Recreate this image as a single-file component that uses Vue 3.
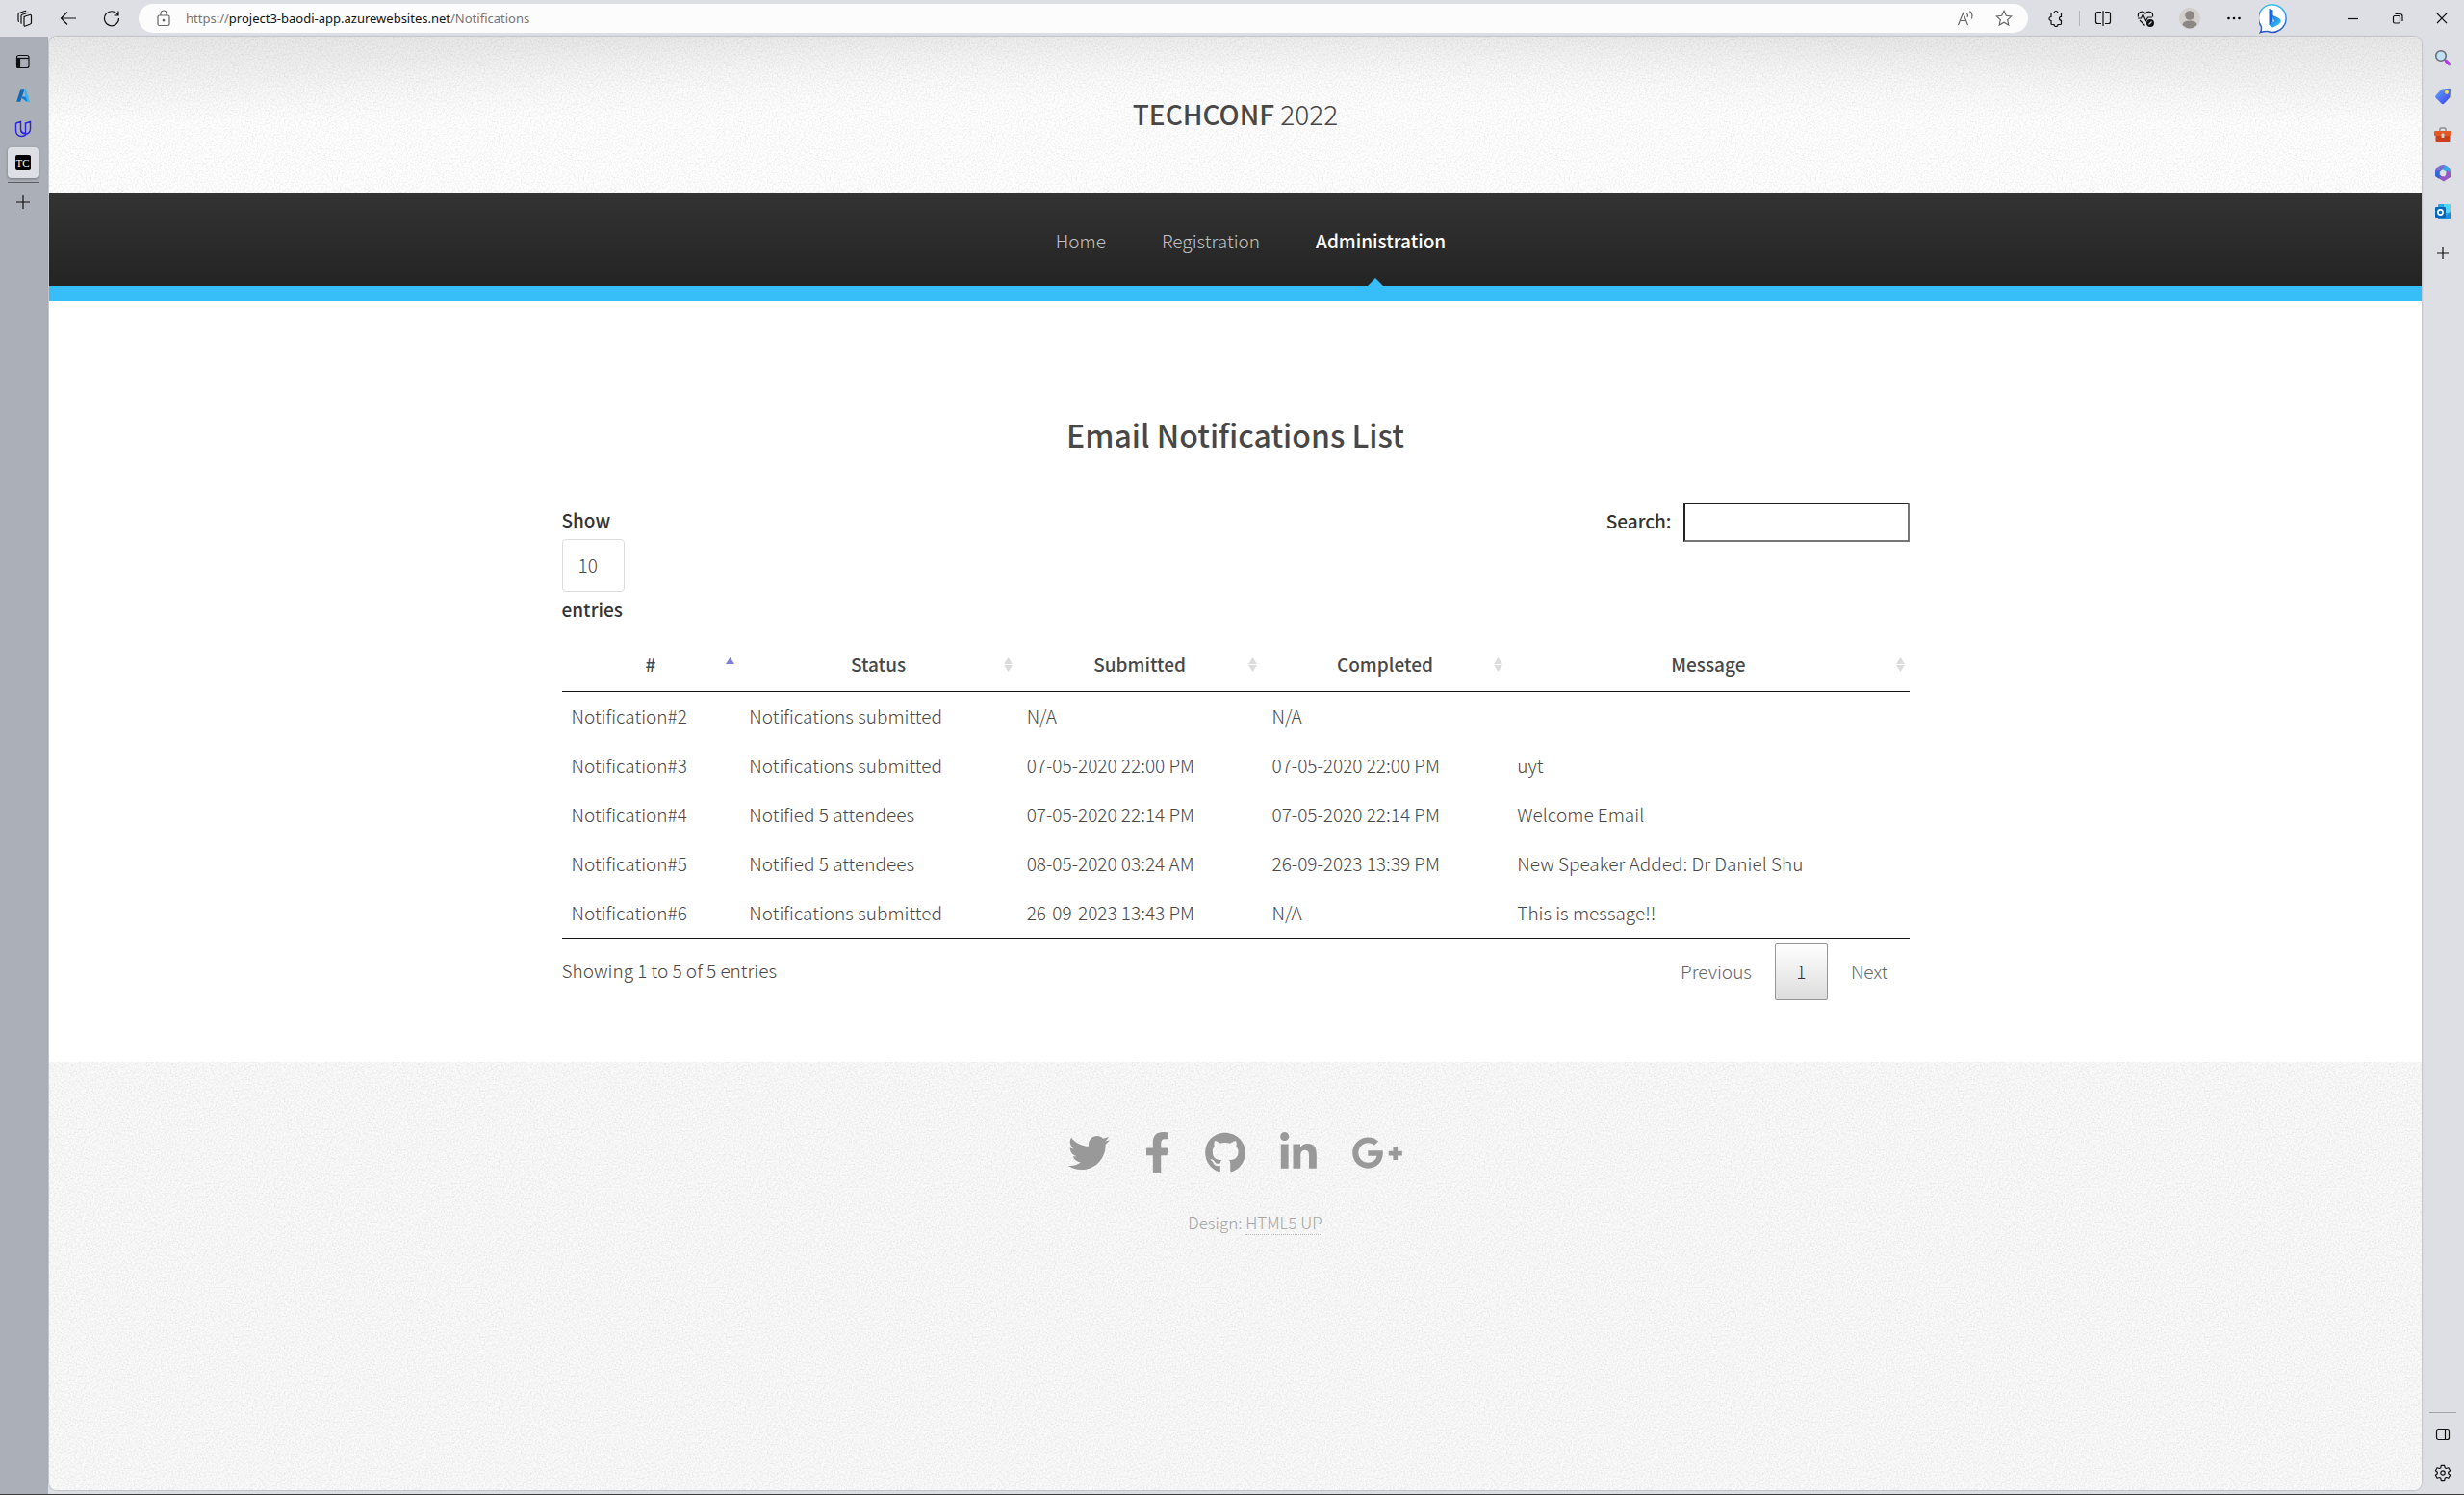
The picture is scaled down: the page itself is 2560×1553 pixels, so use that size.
<script setup>
import { ref } from 'vue'

const pageSize = ref('10')
const query = ref('')

const columns = [
  { name: '#', width: '13.2%', sorted: true },
  { name: 'Status', width: '20.6%' },
  { name: 'Submitted', width: '18.2%' },
  { name: 'Completed', width: '18.2%' },
  { name: 'Message', width: '29.8%' },
]

const rows = [
  ['Notification#2', 'Notifications submitted', 'N/A', 'N/A', ''],
  ['Notification#3', 'Notifications submitted', '07-05-2020 22:00 PM', '07-05-2020 22:00 PM', 'uyt'],
  ['Notification#4', 'Notified 5 attendees', '07-05-2020 22:14 PM', '07-05-2020 22:14 PM', 'Welcome Email'],
  ['Notification#5', 'Notified 5 attendees', '08-05-2020 03:24 AM', '26-09-2023 13:39 PM', 'New Speaker Added: Dr Daniel Shu'],
  ['Notification#6', 'Notifications submitted', '26-09-2023 13:43 PM', 'N/A', 'This is message!!'],
]

const socials = [
  { name: 'Twitter', w: 512, px: 43, d: 'M459.37 151.716c.325 4.548.325 9.097.325 13.645 0 138.72-105.583 298.558-298.558 298.558-59.452 0-114.68-17.219-161.137-47.106 8.447.974 16.568 1.299 25.34 1.299 49.055 0 94.213-16.568 130.274-44.832-46.132-.975-84.792-31.188-98.112-72.772 6.498.974 12.995 1.624 19.818 1.624 9.421 0 18.843-1.3 27.614-3.573-48.081-9.747-84.143-51.98-84.143-102.985v-1.299c13.969 7.797 30.214 12.67 47.431 13.319-28.264-18.843-46.781-51.005-46.781-87.391 0-19.492 5.197-37.36 14.294-52.954 51.655 63.675 129.3 105.258 216.365 109.807-1.624-7.797-2.599-15.918-2.599-24.04 0-57.828 46.782-104.934 104.934-104.934 30.213 0 57.502 12.67 76.67 33.137 23.715-4.548 46.456-13.32 66.599-25.34-7.798 24.366-24.366 44.833-46.132 57.827 21.117-2.273 41.584-8.122 60.426-16.243-14.292 20.791-32.161 39.308-52.628 54.253z' },
  { name: 'Facebook', w: 320, px: 27, d: 'M279.14 288l14.22-92.66h-88.91v-60.13c0-25.35 12.42-50.06 52.24-50.06h40.42V6.26S260.43 0 225.36 0c-73.22 0-121.08 44.38-121.08 124.72v70.62H22.89V288h81.39v224h100.17V288z' },
  { name: 'GitHub', w: 496, px: 42, d: 'M244.8 8C106.1 8 0 113.3 0 252c0 110.9 69.8 205.8 169.5 239.2 12.8 2.3 17.3-5.6 17.3-12.1 0-6.2-.3-40.4-.3-61.4 0 0-70 15-84.7-29.8 0 0-11.4-29.1-27.8-36.6 0 0-22.9-15.7 1.6-15.4 0 0 24.9 2 38.6 25.8 21.9 38.6 58.6 27.5 72.9 20.9 2.3-16 8.8-27.1 16-33.7-55.9-6.2-112.3-14.3-112.3-110.5 0-27.5 7.6-41.3 23.6-58.9-2.6-6.5-11.1-33.3 2.6-67.9 20.9-6.5 69 27 69 27 20-5.6 41.5-8.5 62.8-8.5s42.8 2.9 62.8 8.5c0 0 48.1-33.6 69-27 13.7 34.7 5.2 61.4 2.6 67.9 16 17.7 25.8 31.5 25.8 58.9 0 96.5-58.9 104.2-114.8 110.5 9.2 7.9 17 22.9 17 46.4 0 33.7-.3 75.4-.3 83.6 0 6.5 4.6 14.4 17.3 12.1C428.2 457.8 496 362.9 496 252 496 113.3 383.5 8 244.8 8z' },
  { name: 'LinkedIn', w: 448, px: 38, d: 'M100.28 448H7.4V148.9h92.88zM53.79 108.1C24.09 108.1 0 83.5 0 53.8a53.79 53.79 0 0 1 107.58 0c0 29.7-24.1 54.3-53.79 54.3zM447.9 448h-92.68V302.4c0-34.7-.7-79.2-48.29-79.2-48.29 0-55.69 37.7-55.69 76.7V448h-92.78V148.9h89.08v40.8h1.3c12.4-23.5 42.69-48.3 87.88-48.3 94 0 111.28 61.9 111.28 142.3V448z' },
  { name: 'Google Plus', w: 640, px: 54, d: 'M386.061 228.496c1.834 9.692 3.143 19.384 3.143 31.956C389.204 370.205 315.599 448 204.8 448c-106.084 0-192-85.915-192-192s85.916-192 192-192c51.864 0 95.083 18.859 128.611 50.292l-52.126 50.03c-14.145-13.621-39.028-29.599-76.485-29.599-65.484 0-118.92 54.221-118.92 121.277 0 67.056 53.436 121.277 118.92 121.277 75.961 0 104.513-54.745 108.965-82.773H204.8v-66.009h181.261zm185.406 6.437V179.2h-56.001v55.733h-55.733v56.001h55.733v55.733h56.001v-55.733H627.2v-56.001h-55.733z' },
]
</script>

<template>
  <div class="browser">
    <header class="toolbar">
      <div class="nav-buttons">
        <button class="tool" aria-label="Workspaces">
          <svg width="18" height="18" viewBox="0 0 18 18" class="line"><path d="M7.5 7.5 14 5.5q1.5-.3 1.5 1.200v6.800q0 1-1 1.500l-5 2q-1.500.5-1.500-1V8.500q0-1 1-1.300M5.500 14.500q-.5-.3-.5-1V6.500q0-1 1-1.300L12 3.300q1-.2 1.300.8M3 12.500q-1-.2-1-1.500V5q0-1.200 1-1.500L8.500 1.500q1.200-.3 1.500.7" /></svg>
        </button>
        <button class="tool" aria-label="Back">
          <svg width="18" height="18" viewBox="0 0 18 18" class="line"><path d="M17 9H1.500M8 2.500 1.500 9 8 15.500" /></svg>
        </button>
        <button class="tool" aria-label="Refresh">
          <svg width="18" height="18" viewBox="0 0 18 18" class="line"><path d="M15.500 5.500A7.500 7.500 0 1 0 16.500 9M16 1.500v4.500h-4.500" /></svg>
        </button>
      </div>
      <div class="address">
        <svg width="14" height="18" viewBox="0 0 14 18" class="line grey"><rect x="1" y="6" width="12" height="10.500" rx="1.500" /><path d="M4 6V4a3 3 0 0 1 6 0v2" /><circle cx="7" cy="11.200" r=".8" fill="#666" /></svg>
        <span class="url">https://<b>project3-baodi-app.azurewebsites.net</b>/Notifications</span>
        <div class="address-tools">
          <button class="tool" aria-label="Read aloud">
            <svg width="18" height="18" viewBox="0 0 18 18" class="line grey"><path d="M1.500 16 6.500 3.500 11.500 16M3.300 11.500h6.400M10.500 4q1.500 1.500.5 4M13.500 1.500q3.500 3 2 8" /></svg>
          </button>
          <button class="tool" aria-label="Add to favorites">
            <svg width="18" height="18" viewBox="0 0 18 18" class="line grey"><path d="m9 1.300 2.300 5 5.400.6-4 3.700 1.100 5.400L9 13.300 4.200 16l1.100-5.400-4-3.700 5.400-.6z" /></svg>
          </button>
        </div>
      </div>
      <div class="right-tools">
        <button class="tool" aria-label="Extensions">
          <svg width="18" height="18" viewBox="0 0 18 18" class="line"><path d="M5 3.500h2a2 2 0 0 1 4 0h2.500q1 0 1 1v2.800a2 2 0 0 0 0 4v3.200q0 1-1 1H11a2 2 0 0 1-4 0H5q-1 0-1-1v-3a2 2 0 0 1 0-4v-3q0-1 1-1z" /></svg>
        </button>
        <span class="divider"></span>
        <button class="tool" aria-label="Split screen">
          <svg width="18" height="18" viewBox="0 0 18 18" class="line"><path d="M7 2.500H3.500q-2 0-2 2v8q0 2 2 2H7M11 2.500h3.500q2 0 2 2v8q0 2-2 2H11M9 1v16" /></svg>
        </button>
        <button class="tool" aria-label="Browser essentials">
          <svg width="18" height="18" viewBox="0 0 18 18" class="line"><path d="M1.500 7.500C.5 3 5.500 0 9 4c3.500-4 8.500-1 7.500 3.500M1 9h3.500l2-4 3 6.500L11.500 8H16M3 11l5.500 5.500" /><circle cx="14" cy="14" r="4" fill="#111" stroke="none" /><path d="m12.500 15.500 3-3" stroke="#ccc" /></svg>
        </button>
        <button class="tool avatar" aria-label="Profile">
          <svg width="22" height="22" viewBox="0 0 22 22"><circle cx="11" cy="11" r="11" fill="#d2cfcc" /><circle cx="11" cy="8" r="4.800" fill="#8a8784" /><path d="M3.500 18q0-4.500 7.500-4.500t7.500 4.500q-7.500 7-15 0" fill="#8a8784" /></svg>
        </button>
        <button class="tool" aria-label="Settings and more">
          <svg width="18" height="18" viewBox="0 0 18 18"><circle cx="3.500" cy="9" r="1.300" /><circle cx="9" cy="9" r="1.300" /><circle cx="14.500" cy="9" r="1.300" /></svg>
        </button>
        <button class="tool bing" aria-label="Bing">
          <svg width="32" height="32" viewBox="0 0 32 32">
            <defs><linearGradient id="bingRing" x1="0" y1="0" x2="0" y2="1"><stop offset="0" stop-color="#35c1f1" /><stop offset="1" stop-color="#2456c8" /></linearGradient><linearGradient id="bingMark" x1="0" y1="0" x2="1" y2="1"><stop offset="0" stop-color="#1b6fe0" /><stop offset="1" stop-color="#35c8f0" /></linearGradient></defs>
            <path d="M1.500 30.500q1.500-2 .8-6A14.300 14.300 0 1 1 9 29.500q-3.500-.3-7.500 1z" fill="#fff" stroke="url(#bingRing)" stroke-width="1.500" />
            <path d="M10.500 6l4 1.500v12.300l-4 3.200z" fill="#1b62dc" /><path d="M10.500 22.500 16 19l-2-4.500q-.8-2 1.200-1.300l5.300 2.600q3 1.700 1.700 4.700-.7 1.200-2 2L15 25.300q-2.500 1.200-4.500-2.800" fill="url(#bingMark)" />
          </svg>
        </button>
      </div>
      <div class="window-tools">
        <button class="tool" aria-label="Minimize"><svg width="12" height="12" viewBox="0 0 12 12" class="line"><path d="M1 6.500h10" /></svg></button>
        <button class="tool" aria-label="Restore"><svg width="12" height="12" viewBox="0 0 12 12" class="line"><rect x="1.500" y="3.500" width="7" height="7.500" rx="1.500" /><path d="M3.500 1.500h5q2.500 0 2.500 2.500v5" /></svg></button>
        <button class="tool" aria-label="Close"><svg width="12" height="12" viewBox="0 0 12 12" class="line"><path d="m1 1 10 10M11 1 1 11" /></svg></button>
      </div>
    </header>

    <div class="workspace">
      <aside class="tabs" aria-label="Tabs">
        <button class="side-item" aria-label="Tab actions"><svg width="16" height="16" viewBox="0 0 16 16" class="line"><rect x="1.500" y="1.500" width="12.500" height="13" rx="2" /><path d="M2 4.500h12" /><path d="M2 5h2.500v9.500H2z" fill="#111" /></svg></button>
        <button class="side-item" aria-label="Azure"><svg width="16" height="16" viewBox="0 0 16 16"><path d="M5.500 1.200h4.200L5.200 14.800H1.200z" fill="#1467b3" /><path d="M9 1.200h1.700l4.200 13.600h-4L6.500 11h4z" fill="#35b5ee" /><path d="M4.500 9.500h6l2 5.300z" fill="#1978cf" /></svg></button>
        <button class="side-item" aria-label="Udacity"><svg width="18" height="18" viewBox="0 0 18 18" fill="none" stroke="#2a25e0" stroke-width="1.400"><path d="M1.500 3v7q0 6.500 6 6.500 3.500 0 5-2.500-3 .5-5-1.500-1-1.200-1-3V1.500L1.500 3M6.500 1.500v7.500q0 3.500 3 4.500l2-.8V3l5-1.500V9q0 3.500-3.500 5M11.500 3v10.500" /></svg></button>
        <button class="side-item active" aria-label="TechConf"><span class="favicon">TC</span></button>
        <span class="tab-line"></span>
        <button class="side-item" aria-label="New tab"><svg width="16" height="16" viewBox="0 0 16 16" class="line"><path d="M8 1v14M1 8h14" /></svg></button>
      </aside>

      <div class="page">
        <div class="banner">
          <h1 class="logo"><strong>TECHCONF</strong> 2022</h1>
        </div>
        <nav class="menu">
          <ul>
            <li><a href="#home">Home</a></li>
            <li><a href="#registration">Registration</a></li>
            <li class="current"><a href="#administration">Administration</a></li>
          </ul>
        </nav>

        <main>
          <div class="container">
            <h2>Email Notifications List</h2>
            <div class="controls">
              <label class="length">Show
                <select v-model="pageSize"><option>10</option><option>25</option><option>50</option><option>100</option></select>
                entries
              </label>
              <label class="search">Search:<input v-model="query" type="search" /></label>
            </div>
            <table>
              <colgroup><col v-for="c in columns" :key="c.name" :style="{ width: c.width }" /></colgroup>
              <thead>
                <tr>
                  <th v-for="c in columns" :key="c.name" scope="col">{{ c.name }}
                    <svg class="sort" width="9" height="16" viewBox="0 0 9 16">
                      <path d="M4.500 0 9 7H0z" :fill="c.sorted ? '#7b80dc' : '#dcdcdc'" />
                      <path v-if="!c.sorted" d="M0 8h9l-4.500 7z" fill="#dcdcdc" />
                    </svg>
                  </th>
                </tr>
              </thead>
              <tbody>
                <tr v-for="r in rows" :key="r[0]"><td v-for="(v, i) in r" :key="i">{{ v }}</td></tr>
              </tbody>
            </table>
            <div class="table-footer">
              <div class="info">Showing 1 to 5 of 5 entries</div>
              <div class="pager">
                <button disabled>Previous</button>
                <button class="on">1</button>
                <button disabled>Next</button>
              </div>
            </div>
          </div>
        </main>

        <footer>
          <ul class="icons">
            <li v-for="s in socials" :key="s.name">
              <a href="#social" :aria-label="s.name"><svg :width="s.px" height="43" :viewBox="`0 0 ${s.w} 512`"><path :d="s.d" /></svg></a>
            </li>
          </ul>
          <ul class="copyright">
            <li>Design: <a href="#html5up">HTML5 UP</a></li>
          </ul>
        </footer>
      </div>

      <aside class="apps" aria-label="Sidebar apps">
        <button class="side-item" aria-label="Search"><svg width="18" height="18" viewBox="0 0 18 18"><path d="m11 11 1.500 1.500" stroke="#666c74" stroke-width="2" /><path d="m12.500 12.500 3 3" stroke="#b53bea" stroke-width="3.200" stroke-linecap="round" /><circle cx="7" cy="7" r="5.300" fill="#bfe0f5" stroke="#666c74" stroke-width="1.600" /></svg></button>
        <button class="side-item" aria-label="Shopping"><svg width="18" height="18" viewBox="0 0 18 18"><defs><linearGradient id="tag" x1="0" y1="0" x2="1" y2="1"><stop offset="0" stop-color="#62a8fb" /><stop offset="1" stop-color="#3b3fe8" /></linearGradient></defs><path d="M8.500 1.500 16 .8q1 0 1 1l-.5 7.500q0 .7-.5 1.300l-5.500 6q-1.500 1.500-3 0l-5.800-5.800q-1.200-1.300 0-2.700l5.500-6q.5-.5 1.300-.6z" fill="url(#tag)" /><circle cx="13" cy="4.800" r="2" fill="#ffd84a" /></svg></button>
        <button class="side-item" aria-label="Tools"><svg width="18" height="18" viewBox="0 0 18 18"><path d="M6 5V3q0-1 1-1h4q1 0 1 1v2" fill="none" stroke="#8b8e92" stroke-width="1.500" /><path d="M1.500 9h15v6q0 1-1 1h-13q-1 0-1-1z" fill="#c8401c" /><rect y="5" width="18" height="5" rx="1" fill="#e25a25" /><rect x="7.500" y="7.500" width="3" height="4.500" rx="1" fill="#ccd2d6" /></svg></button>
        <button class="side-item" aria-label="Microsoft 365"><svg width="18" height="18" viewBox="0 0 18 18"><path d="M9 0q-6 1-8 6v6l4 2.500 2-1V7l5-4-1-3z" fill="#7a70cf" /><path d="M10 0q5 1 7 6v6l-4-4-5-3 3-3z" fill="#39a6e8" /><path d="M17 8v5l-7 4.500L2 12.500l5-1 4 1 2-6z" fill="#9658c5" /><path d="M1 7v5l4 2.500 2-2.500V6z" fill="#3467d0" /><path d="m9 5.500 3.200 1.700v3.600L9 12.500l-3.200-1.700V7.200z" fill="#dedfe4" /></svg></button>
        <button class="side-item" aria-label="Outlook"><svg width="18" height="18" viewBox="0 0 18 18"><rect x="4" y="1" width="13" height="12" rx="1" fill="#28a8ea" /><rect x="10" y="1" width="7" height="9" fill="#50d9ff" /><path d="M4 10.500 11 14l6-5.500V16q0 1-1 1H5q-1 0-1-1z" fill="#1490df" /><rect x="1" y="4" width="11" height="11" rx="1" fill="#0866b8" /><circle cx="6.500" cy="9.500" r="2.600" fill="none" stroke="#fff" stroke-width="1.600" /></svg></button>
        <button class="side-item customize" aria-label="Customize"><svg width="14" height="14" viewBox="0 0 14 14" class="line"><path d="M7 1v12M1 7h12" /></svg></button>
        <span class="apps-line"></span>
        <button class="side-item" aria-label="Show sidebar"><svg width="16" height="14" viewBox="0 0 16 14" class="line"><rect x="1.500" y="1.500" width="13" height="11" rx="2" /><path d="M10.500 1.500v11" /></svg></button>
        <button class="side-item" aria-label="Settings"><svg width="18" height="18" viewBox="0 0 18 18" class="line"><circle cx="9" cy="9" r="2.200" /><path d="M7.300 1.300h3.400l.5 2.500 1.200.7 2.500-.8 1.700 3-1.900 1.600v1.400l1.900 1.600-1.700 3-2.500-.8-1.200.7-.5 2.500H7.300l-.5-2.500-1.200-.7-2.500.8-1.700-3 1.900-1.600V8.300L1.400 6.700l1.700-3 2.500.8 1.200-.7z" stroke-linejoin="round" /></svg></button>
      </aside>
    </div>
  </div>
</template>

<style>
body {
  margin: 0;
}
</style>

<style scoped>
.browser {
  --noise: url("data:image/svg+xml,%3Csvg xmlns='http://www.w3.org/2000/svg' width='256' height='256'%3E%3Cfilter id='n' x='0' y='0' width='100%25' height='100%25'%3E%3CfeTurbulence type='fractalNoise' baseFrequency='.6' numOctaves='2' stitchTiles='stitch'/%3E%3CfeColorMatrix values='0 0 0 0 0 0 0 0 0 0 0 0 0 0 0 .16 0 0 0 -.06'/%3E%3C/filter%3E%3Crect width='256' height='256' filter='url(%23n)'/%3E%3C/svg%3E");
  display: flex;
  flex-direction: column;
  box-sizing: border-box;
  min-height: 100vh;
  border-bottom: 1px solid #3c3c3c;
  background: #dedfe4;
  color: #484848;
  font-family: "Noto Sans CJK JP", "Noto Sans", sans-serif;
  font-size: 19px;
  font-weight: 300;
  line-height: 36px;
}
button {
  margin: 0;
  padding: 0;
  border: 0;
  background: none;
  color: inherit;
  font: inherit;
}
ul {
  margin: 0;
  padding: 0;
  list-style: none;
}
svg {
  display: block;
}
.line {
  fill: none;
  stroke: #111;
  stroke-width: 1.2;
}
.grey {
  stroke: #666;
}

.toolbar {
  display: flex;
  align-items: center;
  height: 38px;
}
.tool {
  display: flex;
  flex: none;
}
.nav-buttons {
  display: flex;
  gap: 27px;
  padding: 0 19px 0 17px;
}
.address {
  display: flex;
  flex: 1;
  align-items: center;
  gap: 16px;
  box-sizing: border-box;
  height: 30px;
  padding: 0 16px 0 19px;
  border-radius: 15px;
  background: #fcfcfc;
}
.address-tools {
  display: flex;
  gap: 22px;
}
.url {
  flex: 1;
  color: #767676;
  font-family: "Noto Sans", sans-serif;
  font-size: 13px;
  font-weight: 400;
  line-height: 16px;
}
.url b {
  color: #111;
  font-weight: 400;
}
.right-tools {
  display: flex;
  align-items: center;
  gap: 26px;
  padding-left: 20px;
}
.right-tools .divider {
  width: 1px;
  height: 16px;
  margin: 0 -11px;
  background: #b4b5b9;
}
.right-tools .bing {
  margin-left: -9px;
}
.window-tools {
  display: flex;
  gap: 34px;
  padding: 0 17px 0 60px;
}

.workspace {
  display: flex;
  flex: 1;
}
.side-item {
  display: flex;
  align-items: center;
  justify-content: center;
}
.tabs {
  display: flex;
  flex: none;
  flex-direction: column;
  align-items: center;
  box-sizing: border-box;
  width: 50px;
  padding: 8px 3px 0 0;
  background: #abafb8;
}
.tabs .side-item {
  width: 32px;
  height: 35px;
}
.tabs .active {
  height: 32px;
  margin-top: 2px;
  border-radius: 4px;
  background: #dedfe4;
  box-shadow: 0 1px 3px #0005;
}
.favicon {
  width: 16px;
  height: 16px;
  border-radius: 2px;
  background: #000;
  color: #fff;
  font-family: "Liberation Serif", serif;
  font-size: 11px;
  font-weight: 400;
  line-height: 16px;
}
.tab-line {
  width: 32px;
  height: 1px;
  margin: 4px 0 2px;
  background: #5b5d62;
}
.apps {
  display: flex;
  flex: none;
  flex-direction: column;
  align-items: center;
  box-sizing: border-box;
  width: 44px;
  padding: 2px 0;
}
.apps .side-item {
  width: 40px;
  height: 40px;
}
.apps .customize {
  margin-top: 3px;
}
.apps-line {
  width: 28px;
  height: 1px;
  margin-top: auto;
  margin-bottom: 2px;
  background: #a3a4a8;
}

.page {
  display: flex;
  flex: 1;
  flex-direction: column;
  overflow: hidden;
  min-width: 0;
  margin: 0 0 4px 1px;
  border-radius: 8px;
  background: #fff;
  box-shadow: 0 0 2px #0006;
}
.banner {
  display: flex;
  align-items: center;
  justify-content: center;
  height: 163px;
  background:
    var(--noise),
    radial-gradient(ellipse 56% 110% at 50% 100%, #fff 50%, #fff0 100%),
    linear-gradient(#e8e8e8, #fff 55%);
}
.logo {
  margin: 0 0 4px;
  font-size: 28px;
  font-weight: 300;
  line-height: 40px;
}
.logo strong,
h2,
th,
label,
.current {
  font-weight: 500;
}
.menu {
  border-bottom: 16px solid #37bdf8;
  background: linear-gradient(#333, #242424);
}
.menu ul {
  display: flex;
  justify-content: center;
  gap: 58px;
  height: 96px;
  padding-left: 32px;
}
.menu li {
  display: flex;
  align-items: center;
  position: relative;
}
.menu a {
  padding-top: 2px;
  color: #c0c0c0;
  text-decoration: none;
}
.menu .current a {
  color: #fff;
}
.current::after {
  position: absolute;
  bottom: 0;
  left: calc(50% - 14px);
  border: 8px solid transparent;
  border-top: 0;
  border-bottom-color: #37bdf8;
  content: "";
}

.container {
  box-sizing: border-box;
  max-width: 1400px;
  margin: 0 auto;
  padding: 118px 0 64px;
}
h2 {
  margin: 0 0 51px;
  font-size: 32px;
  line-height: 40px;
  text-align: center;
}
.controls {
  display: flex;
  align-items: flex-start;
  justify-content: space-between;
}
label {
  color: #333;
}
select {
  display: block;
  box-sizing: border-box;
  width: 65px;
  height: 55px;
  margin-top: 2px;
  padding: 0 16px 2px;
  border: 1px solid #ddd;
  border-radius: 4px;
  appearance: none;
  background: #fff;
  color: #484848;
  font: inherit;
  font-weight: 300;
}
.search {
  display: flex;
  align-items: flex-start;
  gap: 12px;
  line-height: 38px;
}
.search input {
  box-sizing: border-box;
  width: 235px;
  height: 41px;
  padding: 0 8px;
  border: 2px solid;
  border-color: #222 #767676 #767676 #222;
  border-radius: 0;
  outline: 0;
  appearance: none;
  background: #fff;
  font: inherit;
}
table {
  width: 100%;
  margin-top: 11px;
  border-spacing: 0;
  border-bottom: 1px solid #111;
  table-layout: fixed;
}
th {
  position: relative;
  height: 56px;
  padding: 0 18px;
  border-bottom: 1px solid #111;
}
.sort {
  position: absolute;
  top: 21px;
  right: 5px;
}
td {
  height: 49px;
  padding: 0 10px 2px;
}
.table-footer {
  display: flex;
  align-items: center;
  justify-content: space-between;
  margin-top: 5px;
}
.info {
  padding-bottom: 4px;
}
.pager {
  display: flex;
  gap: 2px;
}
.pager button {
  min-width: 55px;
  height: 59px;
  padding: 0 21px 2px;
  border: 1px solid transparent;
  border-radius: 2px;
  color: #666;
}
.pager .on {
  border-color: #979797;
  background: linear-gradient(#fff, #dcdcdc);
  color: #333;
}

footer {
  flex: 1;
  padding-top: 73px;
  background: var(--noise), #fafafa;
}
.icons {
  display: flex;
  justify-content: center;
  gap: 36px;
}
.icons svg {
  fill: #999;
}
.copyright {
  display: flex;
  justify-content: center;
  margin-top: 34px;
  padding-left: 20px;
  color: #a4a4a4;
  font-size: 17px;
  line-height: 34px;
}
.copyright li {
  padding-left: 20px;
  border-left: 1px solid #ddd;
}
.copyright a {
  border-bottom: 1px dotted #bbb;
  color: inherit;
  line-height: 20px;
  text-decoration: none;
}
</style>
